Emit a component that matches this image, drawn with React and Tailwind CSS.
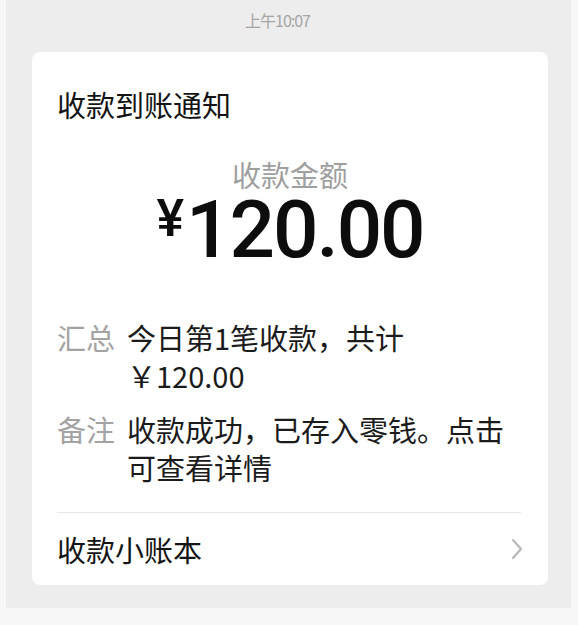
export default function App() {
  const cjk = { fontFamily: '"Noto Sans CJK SC", "Noto Sans", sans-serif' };
  return (
    <div className="w-[578px] h-[625px] bg-[#f7f7f7] overflow-hidden">
      <div className="ml-[6px] w-[565px] h-[608px] bg-[#ededed] flex flex-col">
        <div
          className="pt-[10px] pr-[22px] text-center text-[16px] leading-[20px] text-[#a5a5a5] tracking-[-1px]"
          style={cjk}
        >
          上午10:07
        </div>
        <div className="ml-[26px] mt-[22px] w-[516px] h-[533px] bg-white rounded-[8px] flex flex-col px-[25px]">
          <div className="pt-[34px] text-[29px] leading-[37px] text-[#141414]" style={cjk}>
            收款到账通知
          </div>
          <div className="mt-[36px] text-center text-[29px] leading-[30px] text-[#9f9f9f]" style={cjk}>
            收款金额
          </div>
          <div
            className="mt-[1px] flex items-start justify-center text-[#0d0d0d] font-medium"
            style={{ fontFamily: 'Roboto, "Liberation Sans", sans-serif' }}
          >
            <span className="mt-[3px] text-[52px] leading-[52px] mr-[2px]">¥</span>
            <span className="text-[80px] leading-[80px] tracking-[-2px]">120.00</span>
          </div>
          <div className="mt-[48px] flex flex-col gap-[16px] text-[29px] leading-[38px]" style={cjk}>
            <div className="flex gap-[12px]">
              <span className="text-[#a3a3a3] shrink-0">汇总</span>
              <span className="text-[#1b1b1b]">
                今日第1笔收款，共计
                <br />￥120.00
              </span>
            </div>
            <div className="flex gap-[12px]">
              <span className="text-[#a3a3a3] shrink-0">备注</span>
              <span className="text-[#1b1b1b]">
                收款成功，已存入零钱。点击
                <br />
                可查看详情
              </span>
            </div>
          </div>
          <div className="mt-[26px] h-px bg-[#e8e8e8] mr-[2px]" />
          <div className="flex items-center justify-between pt-[17px] pb-[16px]">
            <span className="text-[29px] leading-[38px] text-[#141414]" style={cjk}>
              收款小账本
            </span>
            <svg width="14" height="22" viewBox="0 0 14 22" className="mr-[-1px]">
              <path d="M3 2 L11 11 L3 20" fill="none" stroke="#b5b5b5" strokeWidth="2" strokeLinecap="round" strokeLinejoin="round" />
            </svg>
          </div>
        </div>
      </div>
    </div>
  );
}
